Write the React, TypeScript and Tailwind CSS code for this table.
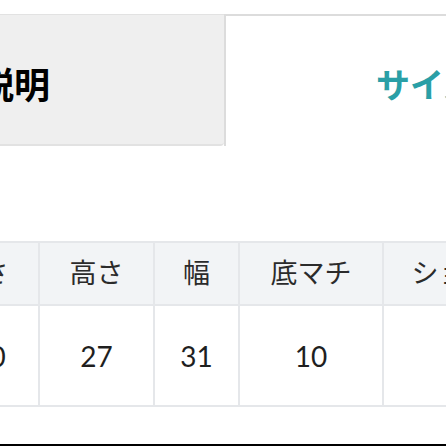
const cols = [
  { label: "長さ", value: "100", w: "w-[115px]" },
  { label: "高さ", value: "27", w: "w-[115px]" },
  { label: "幅", value: "31", w: "w-[85px]" },
  { label: "底マチ", value: "10", w: "w-[144px]" },
  { label: "ショルダー", value: "", w: "w-[192px]" },
]

export default function App() {
  return (
    <div
      className="w-[446px] h-[446px] overflow-hidden bg-white flex flex-col"
      style={{ fontFamily: 'Lato, "Noto Sans CJK JP", sans-serif' }}
    >
      {/* tabs */}
      <div className="mt-[14px] flex h-[132px] shrink-0">
        <div className="w-[224px] shrink-0 flex items-center justify-end pr-[174px] pt-[10px] bg-[#efefef] border-t border-b-2 border-[#e2e2e2] rounded-br-sm">
          <span className="whitespace-nowrap text-[36px] font-bold text-black">商品説明</span>
        </div>
        <div className="flex-1 flex items-center pl-[150px] pt-[6px] border-t-2 border-l-2 border-[#dcdcdc]">
          <span className="whitespace-nowrap text-[34px] font-bold text-[#2a9fa6]">サイズ</span>
        </div>
      </div>

      {/* size table */}
      <table className="mt-[95px] -ml-[77px] border-collapse table-fixed w-[651px] shrink-0">
        <thead>
          <tr className="h-[63px]">
            {cols.map((c) => (
              <th
                key={c.label}
                className={`${c.w} border-2 border-[#e5e7ea] bg-[#f2f4f6] text-[27px] font-normal text-[#2b2b2b] whitespace-nowrap`}
              >
                {c.label}
              </th>
            ))}
          </tr>
        </thead>
        <tbody>
          <tr className="h-[101px]">
            {cols.map((c) => (
              <td
                key={c.label}
                className="border-2 border-[#e5e7ea] text-center text-[28px] text-[#1f1f1f]"
              >
                {c.value}
              </td>
            ))}
          </tr>
        </tbody>
      </table>

      <div className="mt-auto h-[2px] bg-black shrink-0" />
    </div>
  )
}
